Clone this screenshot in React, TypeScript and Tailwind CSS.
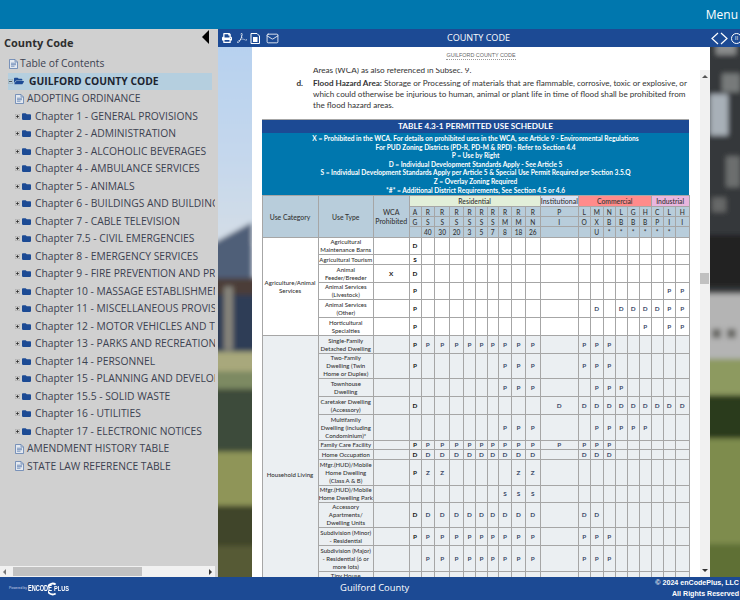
import { FaFolder, FaFolderOpen, FaPrint } from "react-icons/fa";
import { SiAdobeacrobatreader } from "react-icons/si";
import { Mail } from "lucide-react";

const chapters = [
  "Chapter 1 - GENERAL PROVISIONS",
  "Chapter 2 - ADMINISTRATION",
  "Chapter 3 - ALCOHOLIC BEVERAGES",
  "Chapter 4 - AMBULANCE SERVICES",
  "Chapter 5 - ANIMALS",
  "Chapter 6 - BUILDINGS AND BUILDING REGULATIONS",
  "Chapter 7 - CABLE TELEVISION",
  "Chapter 7.5 - CIVIL EMERGENCIES",
  "Chapter 8 - EMERGENCY SERVICES",
  "Chapter 9 - FIRE PREVENTION AND PROTECTION",
  "Chapter 10 - MASSAGE ESTABLISHMENTS",
  "Chapter 11 - MISCELLANEOUS PROVISIONS",
  "Chapter 12 - MOTOR VEHICLES AND TRAFFIC",
  "Chapter 13 - PARKS AND RECREATION",
  "Chapter 14 - PERSONNEL",
  "Chapter 15 - PLANNING AND DEVELOPMENT",
  "Chapter 15.5 - SOLID WASTE",
  "Chapter 16 - UTILITIES",
  "Chapter 17 - ELECTRONIC NOTICES",
];

const colWidths = [
  "w-[56px]", "w-[55.5px]", "w-[35.5px]", "w-[12px]", "w-[13.7px]", "w-[15px]", "w-[13.6px]", "w-[12.4px]",
  "w-[11.6px]", "w-[11px]", "w-[13.4px]", "w-[13.6px]", "w-[15px]", "w-[38px]", "w-[12px]", "w-[13px]",
  "w-[12px]", "w-[12px]", "w-[12px]", "w-[12px]", "w-[12px]", "w-[12px]", "w-[13.7px]",
];

const headTop = ["A", "R", "R", "R", "R", "R", "R", "R", "R", "R", "P", "L", "M", "N", "L", "G", "H", "C", "L", "H"];
const headMid = ["G", "S", "S", "S", "S", "S", "S", "M", "M", "N", "I", "O", "X", "B", "B", "B", "B", "P", "I", "I"];
const headLow = ["", "40", "30", "20", "3", "5", "7", "8", "18", "26", "", "", "U", "*", "*", "*", "*", "*", "*", ""];

type Row = { name: string[]; cells: string; h: string; wca?: string };

const agriculture: Row[] = [
  { name: ["Agricultural", "Maintenance Barns"], cells: "D...................", h: "h-[17px]" },
  { name: ["Agricultural Tourism"], cells: "S...................", h: "h-[10px]" },
  { name: ["Animal", "Feeder/Breeder"], cells: "D...................", h: "h-[18px]", wca: "X" },
  { name: ["Animal Services", "(Livestock)"], cells: "P.................PP", h: "h-[17px]" },
  { name: ["Animal Services", "(Other)"], cells: "P...........D.DDDDPP", h: "h-[18px]" },
  { name: ["Horticultural", "Specialties"], cells: "P...............P.PP", h: "h-[18px]" },
];

const household: Row[] = [
  { name: ["Single-Family", "Detached Dwelling"], cells: "PPPPPPPPPP.PPP......", h: "h-[18px]" },
  { name: ["Two-Family", "Dwelling (Twin", "Home or Duplex)"], cells: "P......PPP.PPP......", h: "h-[25px]" },
  { name: ["Townhouse", "Dwelling"], cells: ".......PPP..PPP.....", h: "h-[18px]" },
  { name: ["Caretaker Dwelling", "(Accessory)"], cells: "D.........DDDDDDDDDD", h: "h-[18px]" },
  { name: ["Multifamily", "Dwelling (including", "Condominium)*"], cells: ".......PPP..PPPPP...", h: "h-[26px]" },
  { name: ["Family Care Facility"], cells: "PPPPPPPPPPPPPP......", h: "h-[9px]" },
  { name: ["Home Occupation"], cells: "DDDDDDDDDD.DDD......", h: "h-[10px]" },
  { name: ["Mfgr.(HUD)/Mobile", "Home Dwelling", "(Class A & B)"], cells: "PZZ.....ZZ..........", h: "h-[26px]" },
  { name: ["Mfgr.(HUD)/Mobile", "Home Dwelling Park"], cells: ".......SSS..........", h: "h-[17px]" },
  { name: ["Accessory", "Apartments/", "Dwelling Units"], cells: "DDDDDDDDDD.DD.......", h: "h-[25px]" },
  { name: ["Subdivision (Minor)", "- Residential"], cells: "PPPPPPPPPP.PPP......", h: "h-[18px]" },
  { name: ["Subdivision (Major)", "- Residential (6 or", "more lots)"], cells: ".PPPPPPPPP.PPP......", h: "h-[26px]" },
  { name: ["Tiny House"], cells: "....................", h: "h-[42px]" },
];

function DocIcon() {
  return (
    <svg viewBox="0 0 9 10" className="w-[9px] h-[10px] shrink-0">
      <path d="M0.5 0.5H6L8.5 3V9.5H0.5Z" fill="#e4e9f0" stroke="#5f7fae" strokeWidth="0.8" />
      <path d="M6 0.5V3H8.5" fill="none" stroke="#5f7fae" strokeWidth="0.7" />
      <path d="M2 4.2H7M2 5.7H7M2 7.2H5.5" stroke="#4a6ea8" strokeWidth="0.7" />
    </svg>
  );
}

function PlusBox({ minus }: { minus?: boolean }) {
  return (
    <svg viewBox="0 0 5 5" className="w-[5px] h-[5px] shrink-0">
      <rect x="0.25" y="0.25" width="4.5" height="4.5" fill="none" stroke="#777" strokeWidth="0.5" strokeDasharray="0.6 0.4" />
      <path d="M1 2.5H4" stroke="#222" strokeWidth="0.7" />
      {!minus && <path d="M2.5 1V4" stroke="#222" strokeWidth="0.7" />}
    </svg>
  );
}

function PhotoBackdrop() {
  return (
    <svg viewBox="218 47 522 530" preserveAspectRatio="none" className="absolute inset-0 w-full h-full">
      <defs>
        <filter id="soft" x="-20%" y="-20%" width="140%" height="140%">
          <feGaussianBlur stdDeviation="2.5" />
        </filter>
        <linearGradient id="sky" x1="0" y1="0" x2="0" y2="1">
          <stop offset="0" stopColor="#b4d0f0" />
          <stop offset="0.65" stopColor="#c6d8ec" />
          <stop offset="1" stopColor="#d4dde6" />
        </linearGradient>
      </defs>
      <g filter="url(#soft)">
        <rect x="210" y="40" width="60" height="215" fill="url(#sky)" />
        <path d="M210 256L252 234V300H210Z" fill="#4f5f78" />
        <rect x="210" y="288" width="60" height="17" fill="#4b3d38" />
        <rect x="210" y="304" width="60" height="56" fill="#2d3d56" />
        <rect x="224" y="296" width="9" height="62" fill="#85837a" />
        <rect x="210" y="359" width="60" height="20" fill="#a8a87c" />
        <rect x="210" y="378" width="60" height="18" fill="#7d8a62" />
        <rect x="210" y="395" width="60" height="62" fill="#3e4c3a" />
        <rect x="210" y="456" width="60" height="53" fill="#8f9558" />
        <rect x="210" y="508" width="60" height="40" fill="#41452a" />
        <rect x="210" y="547" width="60" height="40" fill="#565a35" />

        <rect x="700" y="40" width="50" height="264" fill="#34373a" />
        <rect x="716" y="50" width="20" height="22" fill="#8a8c8c" />
        <rect x="710" y="110" width="18" height="40" fill="#a8b0b8" />
        <rect x="722" y="90" width="18" height="18" fill="#777a7a" />
        <rect x="726" y="170" width="14" height="30" fill="#6c6e6e" />
        <rect x="712" y="210" width="14" height="14" fill="#666868" />
        <rect x="700" y="246" width="50" height="50" fill="#202222" />
        <rect x="700" y="303" width="50" height="64" fill="#b4b4b4" />
        <rect x="712" y="337" width="9" height="9" fill="#6a6a66" />
        <rect x="727" y="337" width="9" height="9" fill="#6a6a66" />
        <rect x="700" y="366" width="50" height="36" fill="#8d9a60" />
        <rect x="700" y="401" width="50" height="43" fill="#2c3a1e" />
        <rect x="700" y="443" width="50" height="103" fill="#7e8c4e" />
        <rect x="700" y="545" width="50" height="40" fill="#5f7035" />
      </g>
    </svg>
  );
}

function Sidebar() {
  return (
    <aside className="w-[218px] shrink-0 bg-[#d0d0d0] flex flex-col relative font-['Open_Sans',sans-serif]">
      <div className="absolute top-[1px] left-[202px] w-0 h-0 border-y-[7px] border-y-transparent border-r-[7px] border-r-black" />
      <h2 className="h-[26px] pl-[4px] pt-[5px] text-[11px] leading-[18px] font-bold text-[#2e2e2e]">County Code</h2>
      <div className="flex-1 w-[215px] overflow-hidden text-[10.3px] text-[#3c4250] whitespace-nowrap">
        <div className="h-[17.5px] flex items-center pl-[9px] gap-[2px]">
          <DocIcon />
          <span>Table of Contents</span>
        </div>
        <div className="h-[17.5px] ml-[8px] w-[204px] bg-[#b5cfdf] flex items-center">
          <PlusBox minus />
          <FaFolderOpen className="w-[10px] h-[10px] ml-[1px] shrink-0 text-[#1c4a94]" />
          <span className="ml-[5px] font-bold text-[#1d2430]">GUILFORD COUNTY CODE</span>
        </div>
        <div className="h-[17.5px] flex items-center pl-[15px] gap-[3px]">
          <DocIcon />
          <span>ADOPTING ORDINANCE</span>
        </div>
        {chapters.map((c) => (
          <div key={c} className="h-[17.5px] flex items-center pl-[15px]">
            <PlusBox />
            <FaFolder className="w-[9px] h-[9px] ml-[2px] shrink-0 text-[#1c4a94]" />
            <span className="ml-[4px] shrink-0">{c}</span>
          </div>
        ))}
        <div className="h-[17.5px] flex items-center pl-[15px] gap-[3px]">
          <DocIcon />
          <span>AMENDMENT HISTORY TABLE</span>
        </div>
        <div className="h-[17.5px] flex items-center pl-[15px] gap-[3px]">
          <DocIcon />
          <span>STATE LAW REFERENCE TABLE</span>
        </div>
      </div>
      <div className="h-[11px] w-[215px] bg-[#f1f1f1] flex items-center justify-between px-[3px]">
        <span className="w-0 h-0 border-y-[3px] border-y-transparent border-r-[3px] border-r-[#777]" />
        <span className="w-[129px] h-[9px] bg-[#c1c1c1] mr-[66px] ml-[6px]" />
        <span className="w-0 h-0 border-y-[3px] border-y-transparent border-l-[3px] border-l-[#333]" />
      </div>
    </aside>
  );
}

function Toolbar() {
  return (
    <div className="h-[18px] bg-[#1c4a94] relative z-10 flex items-center text-white pl-[4px]">
      <FaPrint className="w-[10px] h-[10px] shrink-0" />
      <SiAdobeacrobatreader className="w-[10px] h-[10px] ml-[5px] shrink-0" />
      <svg viewBox="0 0 10 11" className="w-[10px] h-[11px] ml-[3px] shrink-0">
        <path d="M1 .5H7L9.5 3V10.5H1Z" fill="none" stroke="white" strokeWidth="1" />
        <rect x="3" y="4" width="4.5" height="5" fill="white" />
      </svg>
      <Mail className="w-[15px] h-[13px] ml-[5px] shrink-0" strokeWidth={1.5} />
      <span className="flex-1 text-center text-[9.1px] pr-[34px] font-['Open_Sans',sans-serif]">COUNTY CODE</span>
      <div className="w-[29px] flex items-center overflow-hidden shrink-0 gap-[1px]">
        <svg viewBox="0 0 8 13" className="w-[8px] h-[13px] shrink-0">
          <path d="M7 1L1 6.5L7 12" fill="none" stroke="white" strokeWidth="1.2" />
        </svg>
        <svg viewBox="0 0 8 13" className="w-[8px] h-[13px] shrink-0">
          <path d="M1 1L7 6.5L1 12" fill="none" stroke="white" strokeWidth="1.2" />
        </svg>
        <span className="ml-[2px] w-[11px] h-[11px] shrink-0 rounded-full border border-white text-[6px] leading-[9px] text-center">II</span>
      </div>
    </div>
  );
}

function DataRow({ row, category, span, tint }: { row: Row; category?: string; span?: number; tint: string }) {
  return (
    <tr className={`${row.h} ${tint}`}>
      {category && (
        <td rowSpan={span} className="border border-[#a6a6a6] text-center text-[6.1px] font-medium text-[#333] px-[1px]">
          {category}
        </td>
      )}
      <td className={`border border-[#a6a6a6] text-center text-[6px] whitespace-nowrap text-[#333] font-medium ${row.h === "h-[42px]" ? "align-top" : ""}`}>
        {row.name.map((n) => (
          <div key={n}>{n}</div>
        ))}
      </td>
      <td className="border border-[#a6a6a6] text-center font-bold text-[#222]">{row.wca}</td>
      {row.cells.split("").map((c, i) => (
        <td key={i} className={`border border-[#a6a6a6] text-center font-bold ${i === 0 ? "text-[#111]" : "text-[#3a4a68]"}`}>
          {c === "." ? "" : c}
        </td>
      ))}
    </tr>
  );
}

function UseTable() {
  const headCell = "border border-[#a6a6a6] bg-[#b8cddb] text-center text-[#333]";
  const headHeights = ["h-[10px]", "h-[10px]", "h-[11px]"];
  return (
    <table className="table-fixed border-collapse w-[427px] text-[6.4px] leading-[8px] font-['Lato',sans-serif]">
      <colgroup>
        {colWidths.map((w, i) => (
          <col key={i} className={w} />
        ))}
      </colgroup>
      <thead>
        <tr className="h-[13px]">
          <th colSpan={23} className="bg-[#1c4a94] text-white text-[8.2px] leading-[13px] font-bold text-center">
            TABLE 4.3-1 PERMITTED USE SCHEDULE
          </th>
        </tr>
        <tr>
          <th colSpan={23} className="bg-[#0077ae] text-white text-[6.6px] leading-[8.6px] font-bold text-center py-[1px]">
            <div>X = Prohibited in the WCA. For details on prohibited uses in the WCA, see Article 9 - Environmental Regulations</div>
            <div>For PUD Zoning Districts (PD-R, PD-M &amp; RPD) - Refer to Section 4.4</div>
            <div>P = Use by Right</div>
            <div>D = Individual Development Standards Apply - See Article 5</div>
            <div>S = Individual Development Standards Apply per Article 5 &amp; Special Use Permit Required per Section 3.5.Q</div>
            <div>Z = Overlay Zoning Required</div>
            <div>*#* = Additional District Requirements, See Section 4.5 or 4.6</div>
          </th>
        </tr>
        <tr className="h-[11px]">
          <th rowSpan={4} className={`${headCell} text-[6.8px] font-medium`}>Use Category</th>
          <th rowSpan={4} className={`${headCell} text-[6.8px] font-medium`}>Use Type</th>
          <th rowSpan={4} className={`${headCell} text-[7px] leading-[9px] font-medium`}>
            WCA
            <br />
            Prohibited
          </th>
          <th colSpan={10} className="border border-[#a6a6a6] bg-[#e2efd9] text-[6.8px] font-medium text-[#333]">Residential</th>
          <th className="border border-[#a6a6a6] bg-[#d9e2f3] text-[7px] font-medium text-[#333]">Institutional</th>
          <th colSpan={6} className="border border-[#a6a6a6] bg-[#ff8b8b] text-[6.8px] font-medium text-[#333]">Commercial</th>
          <th colSpan={3} className="border border-[#a6a6a6] bg-[#e9b6de] text-[6.8px] font-medium text-[#333]">Industrial</th>
        </tr>
        {[headTop, headMid, headLow].map((line, r) => (
          <tr key={r} className={headHeights[r]}>
            {line.map((c, i) => (
              <th key={i} className={`${headCell} font-medium text-[6.6px]`}>{c}</th>
            ))}
          </tr>
        ))}
      </thead>
      <tbody>
        {agriculture.map((r, i) => (
          <DataRow key={i} row={r} tint="bg-white" category={i === 0 ? "Agriculture/Animal Services" : undefined} span={agriculture.length} />
        ))}
        {household.map((r, i) => (
          <DataRow key={i} row={r} tint="bg-[#ebeff2]" category={i === 0 ? "Household Living" : undefined} span={household.length} />
        ))}
      </tbody>
    </table>
  );
}

function DocumentPanel() {
  return (
    <div className="relative z-10 ml-[34px] w-[458px] flex-1 min-h-0 bg-white flex flex-col">
      <div className="h-[21px] pt-[4px] flex justify-center items-start shrink-0">
        <span className="text-[5.4px] leading-[8px] text-[#666] border-b border-dotted border-[#999] font-['Liberation_Sans',sans-serif]">
          GUILFORD COUNTY CODE
        </span>
      </div>
      <div className="flex flex-1 min-h-0">
        <div className="w-[448px] overflow-hidden font-['Lato',sans-serif] text-[8.15px] leading-[11px] text-[#333]">
          <div className="-mt-[3px] pl-[61px] whitespace-nowrap">Areas (WCA) as also referenced in Subsec. 9.</div>
          <div className="mt-[2px] flex whitespace-nowrap">
            <span className="w-[51px] shrink-0 text-right font-bold">d.</span>
            <div className="pl-[10px]">
              <div>
                <b className="font-bold">Flood Hazard Area:</b> Storage or Processing of materials that are flammable, corrosive, toxic or explosive, or
              </div>
              <div>which could otherwise be injurious to human, animal or plant life in time of flood shall be prohibited from</div>
              <div>the flood hazard areas.</div>
            </div>
          </div>
          <div className="mt-[8px] ml-[9.5px] border-t border-[#a6a6a6] w-[427px]">
            <UseTable />
          </div>
        </div>
        <div className="w-[10px] mt-[2px] bg-[#f1f1f1] flex flex-col items-center relative">
          <span className="mt-[5px] w-0 h-0 border-x-[3px] border-x-transparent border-b-[3px] border-b-[#555]" />
          <span className="absolute top-[203px] left-0 w-[9px] h-[11px] bg-[#c1c1c1]" />
          <span className="mt-auto mb-[5px] w-0 h-0 border-x-[3px] border-x-transparent border-t-[3px] border-t-[#333]" />
        </div>
      </div>
    </div>
  );
}

export default function App() {
  return (
    <div className="w-[740px] h-[600px] overflow-hidden flex flex-col font-['Open_Sans',sans-serif]">
      <header className="h-[29px] bg-[#0077ae] flex items-center justify-end pr-[2px] text-white text-[12px] shrink-0">
        <span>Menu</span>
      </header>

      <div className="flex flex-1 min-h-0">
        <Sidebar />
        <main className="flex-1 relative flex flex-col min-w-0">
          <PhotoBackdrop />
          <Toolbar />
          <DocumentPanel />
        </main>
      </div>

      <footer className="h-[23px] bg-[#1c4a94] text-white flex items-center relative shrink-0">
        <div className="flex items-center pl-[9px] w-[218px] shrink-0">
          <span className="w-[19px] shrink-0 text-[3.4px] whitespace-nowrap text-[#c8d4e8] font-['Liberation_Sans',sans-serif]">Powered by</span>
          <span className="w-[20px] shrink-0 text-[9px] font-bold origin-left scale-x-[0.62] font-['Liberation_Sans',sans-serif]">ENCODE</span>
          <svg viewBox="0 0 10 14" className="w-[9px] h-[14px] shrink-0">
            <path d="M8.5 2A6 6 0 1 0 8.5 12" fill="none" stroke="white" strokeWidth="2.2" />
          </svg>
          <span className="-ml-[3px] w-[14px] shrink-0 text-[8px] font-bold origin-left scale-x-[0.7] font-['Liberation_Sans',sans-serif]">PLUS</span>
        </div>
        <span className="flex-1 text-center text-[9.4px] pr-[124px]">Guilford County</span>
        <div className="text-right text-[7.1px] leading-[11px] font-bold pr-[1px] font-['Liberation_Sans',sans-serif]">
          <div>© 2024 enCodePlus, LLC</div>
          <div>All Rights Reserved</div>
        </div>
      </footer>
    </div>
  );
}
